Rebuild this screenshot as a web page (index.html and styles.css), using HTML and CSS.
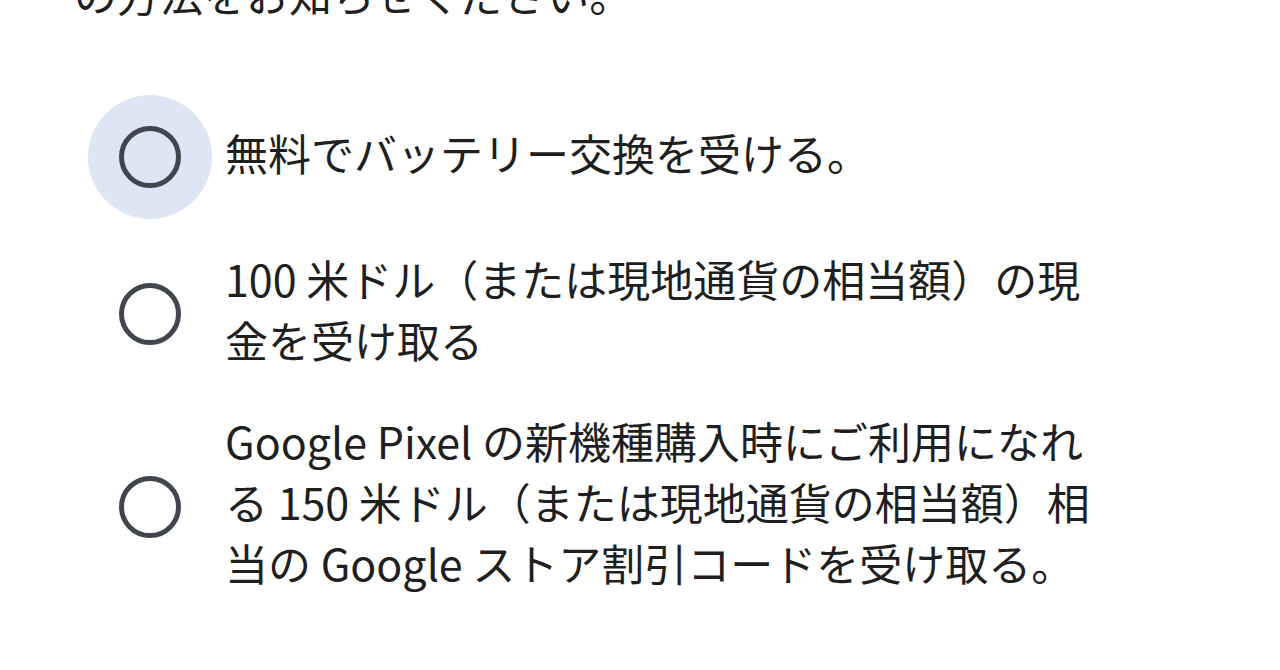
FILE: index.html
```html
<!DOCTYPE html>
<html lang="ja">
<head>
<meta charset="utf-8">
<title>バッテリー交換</title>
<link rel="stylesheet" href="styles.css">
</head>
<body>
<main class="page">
  <p class="intro">の方法をお知らせください。</p>
  <div class="options" role="radiogroup">
    <div class="option" role="radio" aria-checked="false">
      <span class="radio radio-focus"><span class="ring"></span></span>
      <span class="label">無料でバッテリー交換を受ける。</span>
    </div>
    <div class="option" role="radio" aria-checked="false">
      <span class="radio"><span class="ring"></span></span>
      <span class="label">100 米ドル（または現地通貨の相当額）の現<br>金を受け取る</span>
    </div>
    <div class="option" role="radio" aria-checked="false">
      <span class="radio"><span class="ring"></span></span>
      <span class="label">Google Pixel の新機種購入時にご利用になれ<br>る 150 米ドル（または現地通貨の相当額）相<br>当の Google ストア割引コードを受け取る。</span>
    </div>
  </div>
</main>
</body>
</html>
```

FILE: styles.css
```css
html, body {
  margin: 0;
  padding: 0;
  background: #ffffff;
}

body {
  font-family: "Noto Sans CJK JP", "Noto Sans", sans-serif;
  color: #1f1f1f;
  font-size: 43px;
  line-height: 61px;
  overflow: hidden;
  height: 670px;
}

.page {
  margin-top: -37px;
}

.intro {
  margin: 0;
  padding-left: 74px;
  white-space: nowrap;
}

.options {
  display: flex;
  flex-direction: column;
  margin-top: 57px;
}

.option {
  display: flex;
  align-items: center;
  padding: 14px 0;
}

.radio {
  flex: 0 0 124px;
  width: 124px;
  height: 124px;
  margin-left: 88px;
  border-radius: 50%;
  display: flex;
  align-items: center;
  justify-content: center;
}

.radio-focus {
  background: #dee6f5;
}

.ring {
  width: 52px;
  height: 52px;
  border: 5px solid #41454d;
  border-radius: 50%;
}

.label {
  display: block;
  margin-left: 13px;
  padding: 1px 0 11px;
  white-space: nowrap;
}
```
